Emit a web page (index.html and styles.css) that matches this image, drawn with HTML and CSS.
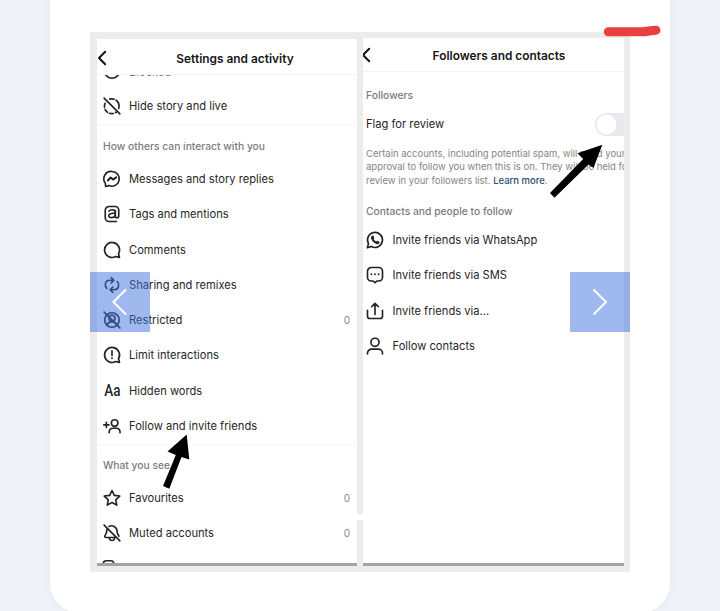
FILE: index.html
```html
<!DOCTYPE html>
<html lang="en">
<head>
<meta charset="utf-8">
<title>Settings guide</title>
<link rel="stylesheet" href="styles.css">
</head>
<body>
<main class="card">
  <div class="slide">
    <section class="panel left">
      <header class="bar">
        <svg class="back" viewBox="0 0 10 16"><path d="M8.2 1.8 2 8l6.2 6.2"/></svg>
        <h2>Settings and activity</h2>
      </header>
      <div class="list">
        <div class="row blocked"><svg class="icon" viewBox="0 0 24 24"><circle cx="12" cy="12" r="9.7"/><path d="m6 6 10 10"/></svg><span class="label">Blocked</span></div>
        <div class="row"><svg class="icon" viewBox="0 0 24 24"><path d="M1.5 1.5l21 21"/><path d="M9 2.8A9.7 9.7 0 0 1 20.800 15.500" stroke-dasharray="6 2.800 12 3"/><path d="M2.800 8.500a9.700 9.700 0 0 0 15 11.500" stroke-dasharray="5 3"/></svg><span class="label">Hide story and live</span></div>
        <h3 class="group first">How others can interact with you</h3>
        <div class="row"><svg class="icon" viewBox="0 0 24 24"><path d="M12 2a9.8 9.8 0 1 1-4 18.8L3.4 22l-.2-4.2A9.8 9.8 0 0 1 12 2z"/><path d="m6.500 14 3.700-4 3.300 2.800 4-3" stroke-width="2.600"/></svg><span class="label">Messages and story replies</span></div>
        <div class="row"><svg class="icon" viewBox="0 0 24 24"><path d="M18 22H8a5 5 0 0 1-5-5V7a5 5 0 0 1 5-5h8a5 5 0 0 1 5 5v8c0 2.7-4.6 2.9-4.6 0V7.5M8 8.3c1.4-2.6 8.3-3.1 8.3 1.3M16.3 11.2c-5.2-.5-8.7.4-8.7 3.1 0 4 8.7 3.4 8.7-1.8"/></svg><span class="label">Tags and mentions</span></div>
        <div class="row"><svg class="icon" viewBox="0 0 24 24"><path d="M20.7 17a10 10 0 1 0-3.8 3.7l5.1 1.2z"/></svg><span class="label">Comments</span></div>
        <div class="row"><svg class="icon" viewBox="0 0 24 24"><path d="M5 16.500C2.500 14.500 1.500 5.700 9 5.700h5M11 2.200l3.500 3.500L11 9.200M19 7.500c2.500 2 3.500 10.800-4 10.800h-5M13 14.800l-3.500 3.500 3.500 3.500"/></svg><span class="label">Sharing and remixes</span></div>
        <div class="row"><svg class="icon" viewBox="0 0 24 24"><circle cx="12" cy="12" r="9.7"/><circle cx="12" cy="9.500" r="3.900"/><path d="M5.500 19c1-6 12-6 13 0M1.500 1.500l21 21"/></svg><span class="label">Restricted</span><span class="count">0</span></div>
        <div class="row"><svg class="icon" viewBox="0 0 24 24"><path d="M20.7 17a10 10 0 1 0-3.8 3.7l5.1 1.2zM12 6.5v6M12 15.700v1"/></svg><span class="label">Limit interactions</span></div>
        <div class="row"><span class="icon letters">Aa</span><span class="label">Hidden words</span></div>
        <div class="row"><svg class="icon" viewBox="0 0 24 24"><circle cx="15.500" cy="8" r="4.400"/><path d="M8.300 21v-1c0-3 2-5 5-5h4.400c3 0 5 2 5 5v1M1 10.500h7M4.500 7v7"/></svg><span class="label">Follow and invite friends</span></div>
        <h3 class="group">What you see</h3>
        <div class="row"><svg class="icon" viewBox="0 0 24 24"><path d="m12 2 3.100 6.500 7.200.9-5.300 5 1.400 7.100-6.400-3.500-6.400 3.500L7 14.400l-5.300-5 7.200-.9z"/></svg><span class="label">Favourites</span><span class="count">0</span></div>
        <div class="row"><svg class="icon" viewBox="0 0 24 24"><path d="M1.500 1.500l21 21M8 3.300A7.300 7.300 0 0 1 18.700 9c0 4.500 1.800 5 2.500 7.200M5.300 7.200C5 12 4.500 13.300 2.700 15.600c-.8 1.200-.2 2.400 1.100 2.400H16M8.500 19c.5 4 6.500 4 7 0"/></svg><span class="label">Muted accounts</span><span class="count">0</span></div>
        <div class="row last"><svg class="icon" viewBox="0 0 24 24"><rect x="3" y="1" width="14" height="18" rx="4"/><path d="M6 5h8"/></svg></div>
      </div>
    </section>
    <div class="divider"></div>
    <section class="panel right">
      <header class="bar">
        <svg class="back" viewBox="0 0 10 16"><path d="M8.2 1.8 2 8l6.2 6.2"/></svg>
        <h2>Followers and contacts</h2>
      </header>
      <h3 class="group followers">Followers</h3>
      <div class="flag"><span class="label">Flag for review</span><span class="toggle"></span></div>
      <p class="note"><span>Certain accounts, including potential spam, will need your</span><br><span>approval to follow you when this is on. They will be held fo</span><br><span>review in your followers list. <b>Learn more</b>.</span></p>
      <h3 class="group contacts">Contacts and people to follow</h3>
      <div class="row"><svg class="icon" viewBox="0 0 24 24"><path d="M1.800 22.200l1.500-5.400a10 10 0 1 1 3.800 3.800z"/><path class="solid" d="M8.200 6.200c-2.500 1.400-1.500 5 1.300 8s6.300 4.400 8 2.300c1.200-1.500.4-2.200-.9-2.900-1.700-1-2-.4-3 .5-1.500-.7-2.700-2-3.400-3.400 1-.9 1.100-1.300.5-2.700-.6-1.500-1.200-2.300-2.500-1.800z"/></svg><span class="label">Invite friends via WhatsApp</span></div>
      <div class="row"><svg class="icon" viewBox="0 0 24 24"><path d="M7 2h10a5 5 0 0 1 5 5v8a5 5 0 0 1-5 5h-2.500L12 22.300 9.500 20H7a5 5 0 0 1-5-5V7a5 5 0 0 1 5-5z"/><path class="dots" d="M7.200 11h.01M12 11h.01M16.800 11h.01"/></svg><span class="label">Invite friends via SMS</span></div>
      <div class="row"><svg class="icon" viewBox="0 0 24 24"><path d="M2 11v8a3 3 0 0 0 3 3h14a3 3 0 0 0 3-3v-8M12 16.500V2M7.500 6.300 12 1.800l4.500 4.500"/></svg><span class="label">Invite friends via...</span></div>
      <div class="row"><svg class="icon" viewBox="0 0 24 24"><circle cx="12" cy="7" r="5.400"/><path d="M2 22.500v-.8a5.500 5.500 0 0 1 5.500-5.500h9a5.500 5.500 0 0 1 5.500 5.500v.8"/></svg><span class="label">Follow contacts</span></div>
    </section>
    <svg class="marks" viewBox="90 22 580 550">
      <path d="M186.700 434.500 167.500 451.500 175.800 455 163 486 169.300 488.700 181.500 457 189.300 459.500z"/>
      <path d="M602.300 144.800 577.500 153.300 583.200 159 550 193 554.500 197.700 588.500 164.500 593.500 168z"/>
      <path class="red" d="M608.300 31.800H642C648 31.800 650 30.300 656 30.200"/>
    </svg>
    <button class="nav prev" aria-label="Previous"><svg viewBox="0 0 60 60"><path d="M36 17.500 23.500 30 36 42.500"/></svg></button>
    <button class="nav next" aria-label="Next"><svg viewBox="0 0 60 60"><path d="M23.500 17.500 36 30 23.500 42.500"/></svg></button>
  </div>
</main>
</body>
</html>
```
FILE: styles.css
```css
* { box-sizing: border-box; }
body { margin: 0; height: 611px; overflow: hidden; background: #eff2f7; font-family: Inter, "Liberation Sans", sans-serif; color: #262626; }
.card { width: 620px; height: 613px; margin: 0 auto; padding: 32px 40px 0; background: #fff; border-radius: 0 0 30px 30px; box-shadow: 0 0 10px rgba(60, 80, 120, .06); }
.slide { position: relative; display: flex; width: 540px; height: 540px; padding: 6px 6px 6px 7px; background: #ececec; }
.panel { height: 528px; overflow: hidden; background: #fff; border-bottom: 3px solid #a3a3a3; }
.left { width: 260px; margin-top: 1px; height: 527px; }
.right { width: 261px; padding-left: 3px; }
.divider { width: 6px; height: 6px; margin-top: 476px; background: #fff; }
.bar { position: relative; display: flex; align-items: center; justify-content: center; height: 36px; padding-top: 4px; border-bottom: 1px solid #f4f4f4; }
.left .bar { padding-left: 16px; }
.right .bar { height: 34px; margin-left: -3px; padding: 3px 0 0 11px; }
.back { position: absolute; left: 0; top: 11px; width: 10px; height: 16px; fill: none; stroke: #111; stroke-width: 2; stroke-linecap: round; stroke-linejoin: round; }
.right .back { left: -2px; top: 9px; }
h2 { margin: 0; font-size: 11.900px; font-weight: 600; line-height: 16px; color: #161616; white-space: nowrap; }
.list { height: 488px; overflow: hidden; }
.row { display: flex; align-items: center; height: 35.250px; padding: 0 7px 0 5.500px; }
.blocked { margin-top: -21.500px; }
.blocked .label { margin-top: 1px; color: #777; }
.icon { flex: none; width: 18px; height: 18px; margin-right: 8.500px; overflow: visible; fill: none; stroke: #222; stroke-width: 2.200; stroke-linecap: round; stroke-linejoin: round; }
.icon .solid { fill: #222; stroke: none; }
.icon .dots { stroke-width: 2.400; }
.letters { display: flex; align-items: center; padding-left: 1.500px; font-family: Roboto, sans-serif; font-size: 16px; font-weight: 500; line-height: 18px; transform: scaleX(.84); transform-origin: 0 50%; }
.label { font-size: 11.170px; line-height: 16px; white-space: nowrap; }
.count { margin-left: auto; font-size: 10px; color: #888; }
.group { margin: 0; height: 37px; padding: 12px 6px 0; border-top: 2px solid #fafafa; font-size: 10.300px; font-weight: 500; line-height: 14px; color: #7c7c7c; white-space: nowrap; }
.first { height: 37.500px; padding-top: 13px; }
.last { padding-left: 4px; height: 35px; }
.right .row { padding-left: 0; }
.right .group { padding-left: 0; border: 0; }
.right .followers { height: 35px; padding-top: 16px; }
.flag { display: flex; align-items: center; justify-content: space-between; height: 34px; }
.toggle { width: 29px; height: 23px; margin: 0; background: radial-gradient(circle at 11.500px 11.500px, #fff 9.500px, transparent 10.300px), #e9e9ed; border-radius: 12px 0 0 12px; }
.note { margin: 6px 0 0; font-size: 9.500px; line-height: 13.300px; color: #858585; white-space: nowrap; }
.note b { font-weight: 500; color: #29506f; }
.right .contacts { height: 35.200px; padding-top: 17px; font-size: 10.300px; }
.right .contacts ~ .row { height: 35.400px; }
.marks { position: absolute; left: 0; top: -10px; width: 580px; height: 550px; pointer-events: none; }
.marks .red { fill: none; stroke: #e9403f; stroke-width: 9; stroke-linecap: round; stroke-linejoin: round; }
.nav { position: absolute; top: 240px; width: 60px; height: 60px; padding: 0; border: 0; background: rgba(63, 115, 221, .5); }
.nav svg { display: block; width: 60px; height: 60px; fill: none; stroke: #fff; stroke-width: 2; }
.prev { left: 0; }
.next { right: 0; }
```
